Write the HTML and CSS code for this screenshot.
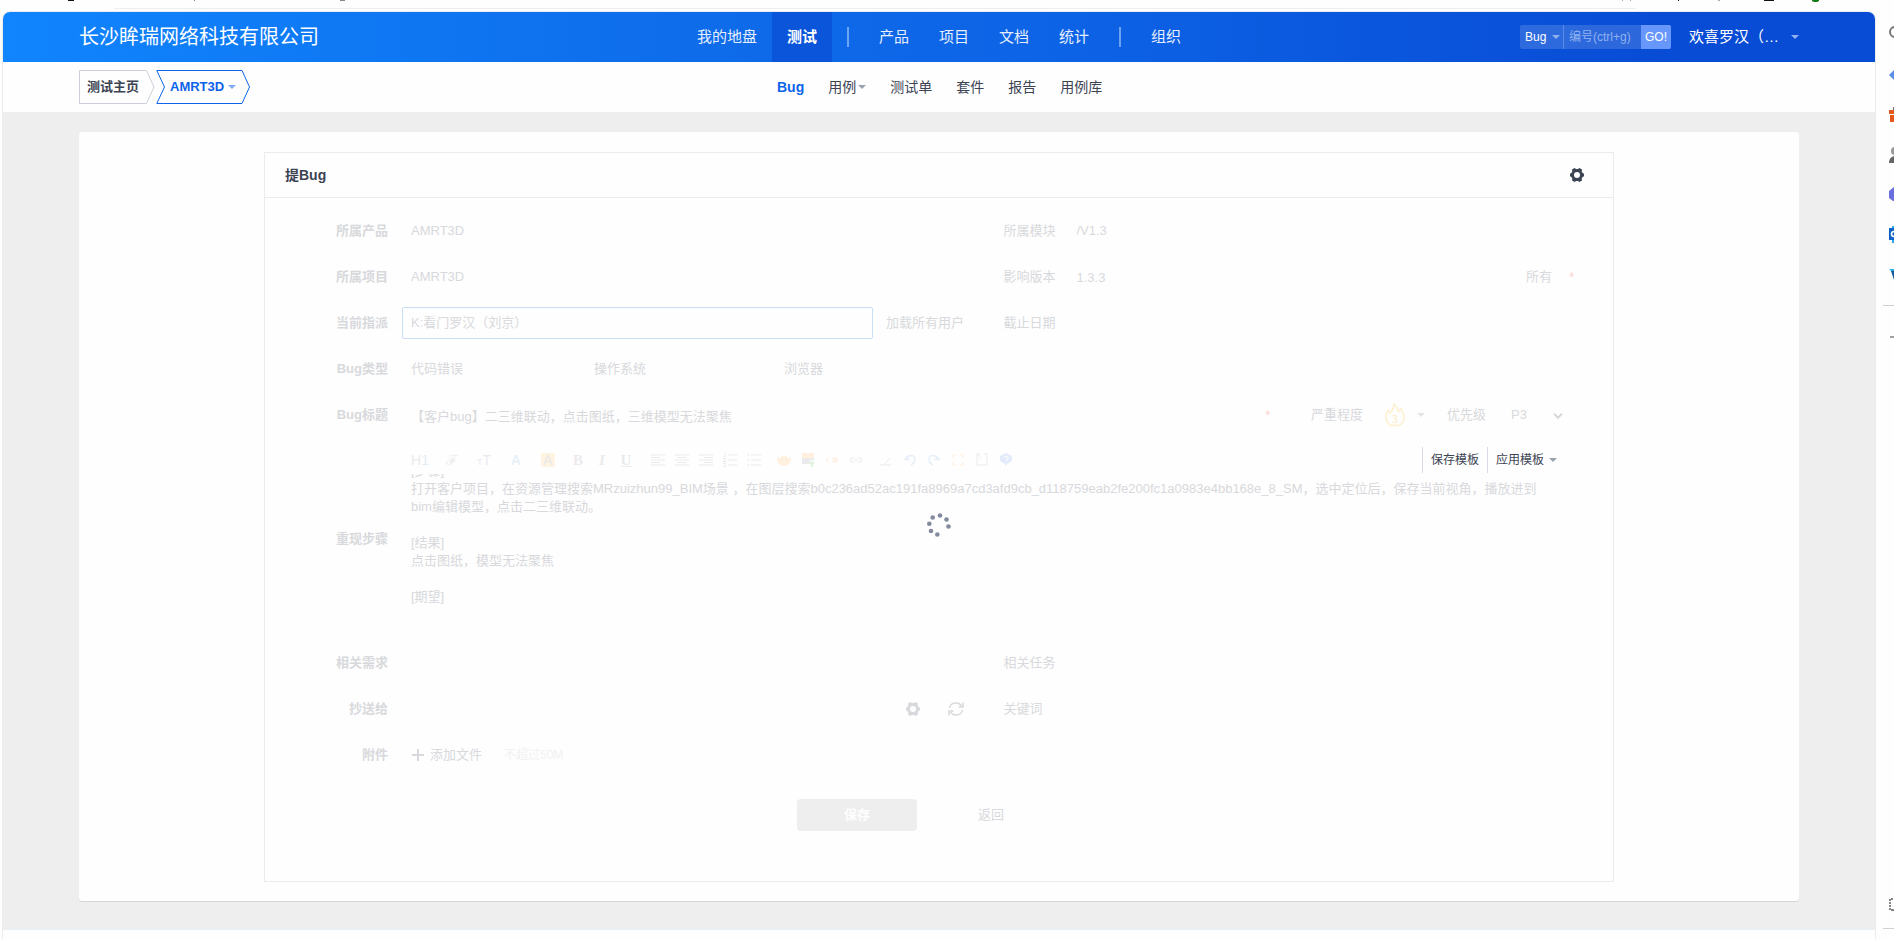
FILE: index.html
```html
<!DOCTYPE html>
<html lang="zh-CN">
<head>
  <meta charset="UTF-8" />
  <meta name="viewport" content="width=device-width, initial-scale=1.0"/>
  <title>提Bug</title>
  <link rel="stylesheet" href="styles.css">
</head>
<body>

  <svg class="sprite" aria-hidden="true">
    <symbol id="gear" viewBox="0 0 14 14">
      <path fill="currentColor" fill-rule="evenodd" d="M4.6 0 6 1h2l1.4-1L12 1.500 11.700 3.500 12.600 5 14 5.700v2.600L12.600 9l-.9 1.500.3 2L9.400 14 8 13H6l-1.400 1L2 12.500l.3-2L1.400 9 0 8.300V5.700L1.400 5l.9-1.500-.3-2zM7 4a3 3 0 1 0 0 6 3 3 0 0 0 0-6z"/>
    </symbol>
  </svg>

  <!-- toolbar edge above the page frame -->
  <div class="topbar">
    <svg class="topbar-left" width="360" height="2">
      <path fill="#111" d="M68 0h6v1h-6z"/>
      <path fill="#888" d="M194 0h1v1h-1zM340 0h5v1h-5z"/>
    </svg>
    <svg width="280" height="2">
      <path fill="#aaa" d="M8 0h1v1H8zM16 0h1v1h-1zM104 0h2v1h-2z"/>
      <path fill="#111" d="M64 0h1v1h-1zM150 0h10v1h-10z"/>
      <path fill="#137a13" d="M198 0h7v1l-2 1h-3l-2-1z"/>
    </svg>
  </div>

  <div class="window">
    <div class="page">
      <header class="header">
        <h1 class="company">长沙眸瑞网络科技有限公司</h1>
        <nav class="main-nav">
          <a href="#">我的地盘</a>
          <a href="#" class="active">测试</a>
          <span class="divider"></span>
          <a href="#">产品</a>
          <a href="#">项目</a>
          <a href="#">文档</a>
          <a href="#">统计</a>
          <span class="divider"></span>
          <a href="#">组织</a>
        </nav>
        <div class="header-right">
          <form class="search">
            <button type="button" class="search-type">Bug <i class="caret"></i></button>
            <input type="text" placeholder="编号(ctrl+g)" aria-label="编号">
            <button type="submit" class="search-go">GO!</button>
          </form>
          <button type="button" class="user">欢喜罗汉（… <i class="caret"></i></button>
        </div>
      </header>

      <div class="subheader">
        <div class="crumbs">
          <a href="#" class="crumb">
            <svg width="76" height="34"><path fill="none" stroke="#cbd0db" d="M.5.5h67l7.500 16.500-7.500 16.500H.5z"/></svg>
            <span>测试主页</span>
          </a>
          <a href="#" class="crumb current">
            <svg width="95" height="34"><path fill="none" stroke="#0c64eb" d="M.8.5H86l7.500 16.500L86 33.500H.8L8.500 17z"/></svg>
            <span>AMRT3D</span> <i class="caret"></i>
          </a>
        </div>
        <nav class="sub-nav">
          <a href="#" class="active">Bug</a>
          <a href="#">用例<i class="caret"></i></a>
          <a href="#">测试单</a>
          <a href="#">套件</a>
          <a href="#">报告</a>
          <a href="#">用例库</a>
        </nav>
      </div>

      <main class="main">
        <div class="panel">
          <section class="card">
            <div class="card-head">
              <h2>提Bug</h2>
              <button type="button" class="icon-btn dark" aria-label="设置"><svg width="14" height="14"><use href="#gear"/></svg></button>
            </div>

            <form class="bug-form">
              <div class="row">
                <label class="name" for="product">所属产品</label>
                <div class="cell"><select id="product" class="control half"><option>AMRT3D</option></select></div>
                <div class="cell">
                  <label class="sub" for="module">所属模块</label>
                  <select id="module" class="control"><option>/V1.3</option></select>
                </div>
              </div>

              <div class="row">
                <label class="name" for="project">所属项目</label>
                <div class="cell"><select id="project" class="control half"><option>AMRT3D</option></select></div>
                <div class="cell">
                  <label class="sub" for="build">影响版本</label>
                  <input id="build" class="control" value="1.3.3">
                  <a href="#" class="all">所有</a>
                  <span class="star">*</span>
                </div>
              </div>

              <div class="row">
                <label class="name" for="assigned">当前指派</label>
                <div class="cell">
                  <select id="assigned" class="control half focus"><option>K:看门罗汉（刘京）</option></select>
                  <a href="#" class="load-users">加载所有用户</a>
                </div>
                <div class="cell">
                  <label class="sub" for="deadline">截止日期</label>
                  <input id="deadline" class="control">
                </div>
              </div>

              <div class="row">
                <label class="name" for="type">Bug类型</label>
                <div class="cell">
                  <select id="type" class="control type"><option>代码错误</option></select>
                  <label class="addon" for="os">操作系统</label>
                  <select id="os" class="control os"><option></option></select>
                  <label class="addon" for="browser">浏览器</label>
                  <select id="browser" class="control browser"><option></option></select>
                </div>
              </div>

              <div class="row">
                <label class="name" for="title">Bug标题</label>
                <div class="cell wide">
                  <input id="title" class="control" value="【客户bug】二三维联动，点击图纸，三维模型无法聚焦">
                  <span class="star">*</span>
                  <span class="addon">严重程度</span>
                  <button type="button" class="severity" aria-label="严重程度">
                    <svg width="20" height="24" fill="none" stroke="#fdf0cd" stroke-width="1.500">
                      <path d="M6 22.500C2.500 20.500 1 17.500 1 14c0-3 .5-5 2-7l2 3c2-2 4-5 4-9 2 1.500 3.500 4 4.500 7.500L16 6c2 3 3 5.500 3 8.500 0 3.500-2 6.500-5 8z"/>
                      <text x="10" y="20" text-anchor="middle" class="severity-num">3</text>
                    </svg>
                    <i class="caret"></i>
                  </button>
                  <label class="addon" for="pri">优先级</label>
                  <div class="priority">
                    <select id="pri" class="control"><option>P3</option></select>
                    <svg width="10" height="6"><path d="M1 .8 5 4.800 9 .8" fill="none" stroke="#d6d8dc" stroke-width="2"/></svg>
                  </div>
                </div>
              </div>

              <div class="row editor-row">
                <span class="name">重现步骤</span>
                <div class="wide editor">
                  <div class="editor-bar">
                    <div class="tools first">
                      <button type="button">H<span class="blue">1</span></button>
                      <button type="button" class="script">ℱ</button>
                      <button type="button"><small>T</small>T</button>
                      <button type="button" class="blue">A</button>
                      <button type="button"><span class="mark">A</span></button>
                    </div>
                    <div class="tools serif">
                      <button type="button"><b>B</b></button>
                      <button type="button"><b><em>I</em></b></button>
                      <button type="button"><b><u>U</u></b></button>
                    </div>
                    <div class="tools">
                      <button type="button" aria-label="左对齐"><svg width="14" height="12"><path d="M0 1h14M0 3.500h9M0 6h14M0 8.500h9M0 11h14"/></svg></button>
                      <button type="button" aria-label="居中"><svg width="14" height="12"><path d="M0 1h14M2.500 3.500h9M0 6h14M2.500 8.500h9M0 11h14"/></svg></button>
                      <button type="button" aria-label="右对齐"><svg width="14" height="12"><path d="M0 1h14M5 3.500h9M0 6h14M5 8.500h9M0 11h14"/></svg></button>
                      <button type="button" aria-label="编号"><svg width="14" height="14"><path d="M5 2h9M5 7h9M5 12h9M1 0h1v4M0 5.500h2.500v1.500L0 8.500h3M0 10.500h2.500v3H0"/></svg></button>
                      <button type="button" aria-label="项目符号"><svg width="14" height="12"><path d="M4 1h10M4 6h10M4 11h10M0 1h2M0 6h2M0 11h2"/></svg></button>
                    </div>
                    <div class="tools">
                      <button type="button" aria-label="表情"><svg width="14" height="12"><path class="fill-orange" d="M0 3l3 1 2-3 2 2 2-2 2 3 3-1c0 5-2 9-7 9S0 8 0 3z"/><path d="M5 5v2M9 5v2"/></svg></button>
                      <button type="button" aria-label="图片"><svg width="14" height="14"><path class="fill-orange" d="M1 0h12v5H1z"/><path class="fill-grey" d="M1 5h12v2H9v4H1z"/><path class="fill-green" d="m11 7 3 4h-2v3h-2v-3H8z"/></svg></button>
                      <button type="button" aria-label="代码"><svg width="14" height="12"><path class="orange" d="M4 4 1 6l3 2M7 5h6M7 7.500h6M9 3v6M11 3v6"/></svg></button>
                      <button type="button" aria-label="链接"><svg width="14" height="8"><path d="M5 2H3a2 2 0 0 0 0 4h2M9 2h2a2 2 0 0 1 0 4H9M4.500 4h5"/></svg></button>
                    </div>
                    <div class="tools">
                      <button type="button" aria-label="清除"><svg width="14" height="12"><path d="M1 11h11M5 11l6-7"/></svg></button>
                      <button type="button" aria-label="撤销"><svg width="14" height="12"><path class="stroke-blue" d="M5 2 2 5.500h5M3 5c3-5 9-4 9 0 0 3-2 5-4 6"/></svg></button>
                      <button type="button" aria-label="重做"><svg width="14" height="12"><path class="stroke-blue" d="m9 2 3 3.500H7M11 5C8 0 2 1 2 5c0 3 2 5 4 6"/></svg></button>
                      <button type="button" aria-label="全屏"><svg width="14" height="12"><path class="orange" d="M2 4V1h3M9 1h3v3M2 8v3h3M9 11h3V8"/></svg></button>
                      <button type="button" aria-label="源码"><svg width="14" height="13"><path d="M5 1H2v11h10V1H9M2 1l4 5"/></svg></button>
                      <button type="button" aria-label="帮助"><svg width="14" height="13"><path class="fill-blue" d="m7 0 6 3v5l-5 3-1 2-1-2-5-3V3z"/><path class="cut" d="M5 4h4v2L7 8"/></svg></button>
                    </div>
                    <div class="templates">
                      <button type="button">保存模板</button>
                      <button type="button">应用模板<i class="caret"></i></button>
                    </div>
                  </div>
                  <div class="editor-text">
                    <p>[步骤]<br>打开客户项目，在资源管理搜索MRzuizhun99_BIM场景 ，在图层搜索b0c236ad52ac191fa8969a7cd3afd9cb_d118759eab2fe200fc1a0983e4bb168e_8_SM，选中定位后，保存当前视角，播放进到<br>bim编辑模型，点击二三维联动。</p>
                    <p>[结果]<br>点击图纸，模型无法聚焦</p>
                    <p>[期望]</p>
                  </div>
                </div>
              </div>

              <div class="row">
                <label class="name" for="story">相关需求</label>
                <div class="cell"><select id="story" class="control half"><option></option></select></div>
                <div class="cell">
                  <label class="sub" for="task">相关任务</label>
                  <select id="task" class="control"><option></option></select>
                </div>
              </div>

              <div class="row">
                <label class="name" for="mailto">抄送给</label>
                <div class="cell">
                  <input id="mailto" class="control half">
                  <div class="mail-tools">
                    <button type="button" class="icon-btn" aria-label="维护联系人"><svg width="14" height="14"><use href="#gear"/></svg></button>
                    <button type="button" class="icon-btn" aria-label="刷新"><svg width="16" height="14" fill="none" stroke="currentColor" stroke-width="1.500"><path d="M1.500 6C2 3 4.500 1 8 1c2.500 0 4.500 1.200 5.500 3M14.500 8c-.5 3-3 5-6.500 5-2.500 0-4.500-1.200-5.500-3M15 .5v4.500h-4.500M1 13.500V9h4.500"/></svg></button>
                  </div>
                </div>
                <div class="cell">
                  <label class="sub" for="keywords">关键词</label>
                  <input id="keywords" class="control">
                </div>
              </div>

              <div class="row">
                <span class="name">附件</span>
                <div class="cell">
                  <button type="button" class="add-file"><svg width="12" height="12"><path d="M6 0v12M0 6h12" stroke="#d8d9df" stroke-width="2"/></svg>添加文件</button>
                  <span class="hint">不超过50M</span>
                </div>
              </div>

              <div class="actions">
                <button type="submit" class="save">保存</button>
                <button type="button" class="back">返回</button>
              </div>
            </form>

            <svg class="loading" width="24" height="24" fill="#838a9d">
              <circle cx="13" cy="2.500" r="2.300"/><circle cx="19.500" cy="6.500" r="2.300"/><circle cx="21.500" cy="13.500" r="2.300"/>
              <circle cx="10.300" cy="21.500" r="2.300"/><circle cx="4" cy="18" r="2.300"/><circle cx="2.300" cy="10.700" r="2.300"/><circle cx="5.700" cy="4.500" r="2.300"/>
            </svg>
          </section>
        </div>
      </main>
      <footer class="footer"></footer>
    </div>

    <aside class="sidebar">
      <svg width="24" height="24"><circle cx="7" cy="10" r="5" fill="none" stroke="#777" stroke-width="2"/></svg>
      <svg width="24" height="24"><path fill="#5a8fe8" d="m1 13 8-8v16z"/></svg>
      <svg width="24" height="24"><path fill="#e2571b" d="M1 8h20v4H1zM2 13h18v7H2z"/><path fill="#777" d="M5 5h4v3H5z"/></svg>
      <svg width="24" height="24"><circle cx="7" cy="9" r="4" fill="#999"/><path fill="#666" d="M1 21c0-5 3-7 7-7v7z"/></svg>
      <svg width="24" height="24"><path fill="#6a6fe0" d="m1 9 5-4h6v14H5l-4-3z"/></svg>
      <svg width="24" height="24"><path fill="#28a8ea" d="M4 4h8v17H4z"/><path fill="#0f62c5" d="M1 6h10v12H1z"/><circle cx="6" cy="12" r="2.500" fill="none" stroke="#fff" stroke-width="1.500"/></svg>
      <svg width="24" height="24"><path fill="#2bb5e8" d="M1 7h14l-9 5z"/><path fill="#175a9c" d="m3 9 3 9 6-10z"/></svg>
      <hr>
      <svg width="24" height="24"><path d="M2 12h14" stroke="#444"/></svg>
      <svg class="capture" width="24" height="24"><path fill="none" stroke="#111" stroke-dasharray="2 1" d="M14 6H2v11h12"/><path fill="#555" d="m4 16 4 1v4z"/></svg>
      <hr>
    </aside>
  </div>

</body>
</html>
```
FILE: styles.css
```css
* {
  box-sizing: border-box;
}

body {
  margin: 0;
  background: #fefefe;
  color: #3c4353;
  font-family: "Liberation Sans", "Noto Sans CJK SC", sans-serif;
  font-size: 13px;
  line-height: 18px;
  overflow: hidden;
}

a {
  color: inherit;
  text-decoration: none;
}

button, input, select {
  font: inherit;
  color: inherit;
  background: none;
  border: none;
  padding: 0;
  margin: 0;
}

svg {
  display: block;
  flex: none;
}

.sprite {
  position: absolute;
  width: 0;
  height: 0;
}

.caret {
  display: inline-block;
  border: 4px solid transparent;
  border-top-color: #98a3b0;
  border-bottom: none;
}

/* frame */
.topbar {
  display: flex;
  justify-content: space-between;
  height: 9px;
  position: relative;
}

.topbar::after {
  content: "";
  position: absolute;
  left: 114px;
  right: 258px;
  bottom: 0;
  height: 1px;
  background: #eee;
}

.window {
  display: flex;
  padding-top: 2px;
}

.page {
  flex: 1;
  min-width: 0;
  margin-left: 2px;
  border: 1px solid #ececec;
  border-bottom: none;
  border-radius: 8px 8px 0 0;
}

.sidebar {
  width: 18px;
  padding: 11px 0 7px 12px;
  overflow: hidden;
  display: flex;
  flex-direction: column;
  gap: 16px;
}

.sidebar hr {
  width: 11px;
  margin: 3px 0 3px -5px;
  border: none;
  border-top: 1px solid #d0d0d0;
}

.sidebar .capture {
  margin-top: auto;
  margin-bottom: -8px;
}

/* header */
.header {
  display: flex;
  align-items: center;
  height: 50px;
  padding: 0 76px;
  border-radius: 7px 7px 0 0;
  background: linear-gradient(90deg, #1085fd, #0e6ae9 40%, #0d64e6 55%, #084bd4 90%);
  color: #fff;
}

.company {
  flex: 0 0 603px;
  margin: 0;
  font-size: 20px;
  font-weight: 400;
  line-height: 50px;
}

.main-nav {
  display: flex;
  align-items: center;
  font-size: 15px;
  line-height: 50px;
  white-space: nowrap;
}

.main-nav a {
  padding: 0 15px;
  color: #e6effd;
}

.main-nav a.active {
  background: #0a55d9;
  color: #fff;
  font-weight: 700;
}

.divider {
  width: 2px;
  height: 20px;
  margin: 0 15px;
  background: rgba(255, 255, 255, 0.4);
}

.header-right {
  display: flex;
  align-items: center;
  margin-left: auto;
}

.header-right .caret {
  border-top-color: #8fb2ee;
}

.search {
  display: flex;
  width: 151px;
  height: 24px;
  font-size: 12px;
  border-radius: 2px;
  overflow: hidden;
  background: rgba(255, 255, 255, 0.15);
}

.search-type {
  display: flex;
  align-items: center;
  gap: 6px;
  width: 44px;
  padding-left: 5px;
  border-right: 1px solid #5b8be6;
}

.search input {
  flex: 1;
  min-width: 0;
  padding-left: 5px;
}

.search input::placeholder {
  color: #8fb2ee;
}

.search-go {
  width: 30px;
  background: #6797fb;
}

.user {
  display: flex;
  align-items: center;
  gap: 12px;
  margin-left: 18px;
  font-size: 15px;
}

/* sub header */
.subheader {
  display: flex;
  align-items: center;
  height: 50px;
  padding: 0 76px;
}

.crumbs {
  display: flex;
  gap: 1px;
  flex: 0 0 698px;
  font-weight: 700;
}

.crumb {
  position: relative;
  display: flex;
  align-items: center;
  gap: 4px;
  width: 76px;
  height: 34px;
  padding-left: 8px;
}

.crumb svg {
  position: absolute;
  left: 0;
  top: 0;
}

.crumb.current {
  width: 95px;
  padding-left: 14px;
  color: #0c64eb;
}

.crumb .caret {
  border-top-color: #7fadf5;
}

.sub-nav {
  display: flex;
  gap: 24px;
  font-size: 14px;
}

.sub-nav a {
  display: flex;
  align-items: center;
  gap: 2px;
}

.sub-nav .active {
  color: #0c64eb;
  font-weight: 700;
}

/* content */
.main {
  padding: 20px 76px 28px;
  background: #eee;
}

.panel {
  padding: 20px 0 19px;
  border-radius: 3px;
  background: #fefefe;
  box-shadow: 0 1px 0 #d5d5d5;
}

.card {
  position: relative;
  max-width: 1350px;
  margin: 0 auto;
  border: 1px solid #ebebeb;
}

.footer {
  height: 10px;
  border-top: 1px solid #e8f0f8;
}

.card-head {
  display: flex;
  align-items: center;
  justify-content: space-between;
  height: 45px;
  padding: 0 29px 0 20px;
  border-bottom: 1px solid #ebebeb;
}

.card-head h2 {
  margin: 0;
  font-size: 14px;
}

/* form, greyed while it is being submitted */
.bug-form {
  padding: 17px 8px 50px 0;
  color: #d8d9dc;
}

.row {
  display: grid;
  grid-template-columns: 137px 1fr 1fr;
  align-items: center;
  min-height: 32px;
  margin-bottom: 14px;
}

.name {
  padding-right: 14px;
  text-align: right;
  font-weight: 700;
}

.cell {
  display: flex;
  align-items: center;
  min-width: 0;
}

.wide {
  grid-column: span 2;
}

.control {
  flex: 1;
  min-width: 0;
  height: 32px;
  padding: 0 8px;
  border: 1px solid transparent;
  border-radius: 2px;
  appearance: none;
  opacity: 1;
}

.half {
  flex: 0 1 471px;
}

.focus {
  border-color: #c9dff8;
}

.sub {
  width: 64px;
}

.addon {
  padding: 0 10px;
}

.type {
  flex: 0 0 182px;
}

.os {
  flex: 0 0 118px;
}

.browser {
  flex: 0 0 40px;
}

.all {
  margin-right: 17px;
}

.star {
  width: 36px;
  color: #f9d5d0;
  font-size: 14px;
}

#title + .star {
  margin-left: 8px;
}

.load-users {
  margin-left: 13px;
}

.severity {
  display: flex;
  align-items: center;
  gap: 12px;
  padding: 0 12px;
}

.severity .caret {
  border-top-color: #e3e5e8;
}

.severity-num {
  font: 700 12px "Liberation Serif", serif;
  fill: #fdf0cd;
  stroke: none;
}

.priority {
  position: relative;
  display: flex;
  width: 71px;
  margin: 0 32px 0 6px;
}

.priority svg {
  position: absolute;
  right: 10px;
  top: 14px;
}

/* editor */
.editor {
  height: 188px;
}

.editor-bar {
  display: flex;
  align-items: center;
  gap: 6px;
  height: 29px;
}

.tools {
  display: flex;
  color: #ebebed;
}

.tools button {
  display: flex;
  align-items: center;
  justify-content: center;
  width: 24px;
  height: 24px;
}

.tools.first {
  margin: 0 -4px 0 2px;
}

.tools.first button {
  width: 32px;
  font-size: 14px;
}

.tools .blue {
  color: #e3edf8;
}

.tools .script {
  font-family: "DejaVu Serif", serif;
}

.tools small {
  font-size: 9px;
  padding-top: 4px;
}

.mark {
  width: 14px;
  line-height: 14px;
  background: #fff3e2;
  color: #e8e8ea;
}

.serif {
  margin-right: 2px;
  font-family: "Liberation Serif", serif;
  font-size: 15px;
}

.tools path {
  fill: none;
  stroke: #ebebed;
}

.tools .orange {
  stroke: #fdeee0;
}

.tools .stroke-blue {
  stroke: #e6eff9;
  stroke-width: 1.5;
}

.tools .cut {
  stroke: #fefefe;
}

.tools .fill-orange {
  fill: #fff1de;
  stroke: none;
}

.tools .fill-grey {
  fill: #ebebed;
  stroke: none;
}

.tools .fill-green {
  fill: #e2f3e2;
  stroke: none;
}

.tools .fill-blue {
  fill: #e3ebfa;
  stroke: none;
}

.templates {
  display: flex;
  margin-left: auto;
  margin-right: 40px;
  color: #3c4353;
  font-size: 12px;
}

.templates button {
  display: flex;
  align-items: center;
  gap: 5px;
  height: 26px;
  padding: 0 8px;
  border-left: 1px solid #d8dbe4;
}

.editor-text {
  height: 159px;
  padding: 0 9px;
  overflow: hidden;
  white-space: nowrap;
}

.editor-text p {
  margin: 0 0 18px;
}

/* scrolled by most of the first line */
.editor-text p:first-child {
  margin-top: -12px;
}

.icon-btn {
  display: flex;
  align-items: center;
  justify-content: center;
  height: 32px;
}

.icon-btn.dark {
  color: #3c4353;
}

.mail-tools {
  display: flex;
  margin-left: 18px;
}

.mail-tools .icon-btn {
  width: 43px;
}

.add-file {
  display: flex;
  align-items: center;
  gap: 6px;
  padding-left: 10px;
}

.hint {
  margin-left: 22px;
  color: #f1f1f2;
  font-size: 12px;
}

.actions {
  display: flex;
  justify-content: center;
  gap: 14px;
  margin-top: 28px;
  padding-right: 22px;
}

.actions button {
  width: 120px;
  height: 32px;
  border-radius: 4px;
}

.save {
  background: #eee;
  color: #fefefe;
  font-weight: 700;
}

.loading {
  position: absolute;
  left: 50%;
  top: 360px;
  margin-left: -12px;
}
```
